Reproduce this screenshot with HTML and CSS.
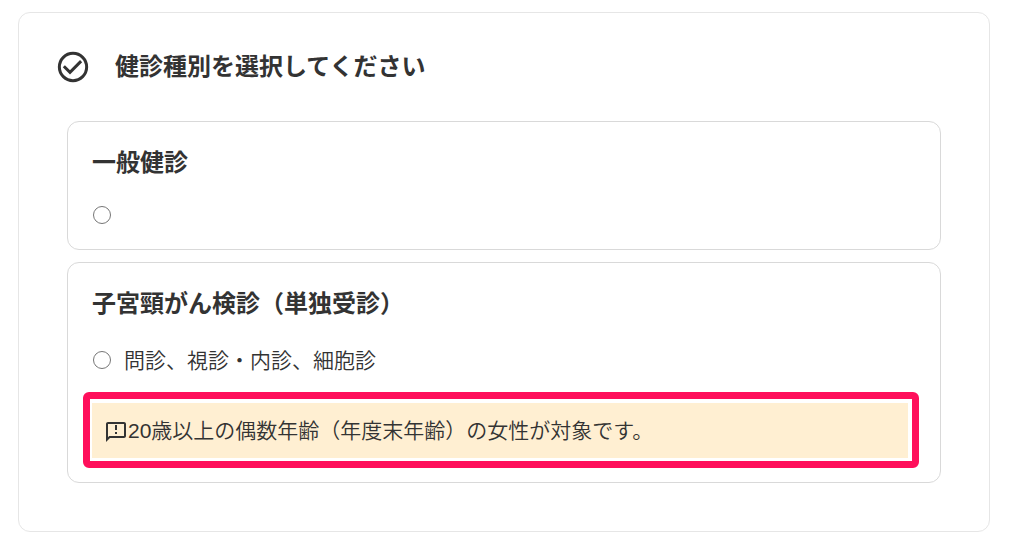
FILE: index.html
```html
<!DOCTYPE html>
<html lang="ja">
<head>
    <meta charset="UTF-8">
    <meta name="viewport" content="width=device-width, initial-scale=1.0">
    <title>健診種別の選択</title>
    <link rel="stylesheet" href="styles.css">
</head>
<body>
    <form class="panel">
        <div class="panel-header">
            <svg class="icon-check" viewBox="0 0 24 24" aria-hidden="true">
                <circle cx="12" cy="12" r="9.100"/>
                <path d="M5.900 11.500l4.100 4.100 7.400-7.500"/>
            </svg>
            <h1 class="title">健診種別を選択してください</h1>
        </div>

        <div class="card-list">
            <section class="card">
                <h2 class="title" id="general">一般健診</h2>
                <div class="option">
                    <input type="radio" name="kenshin" value="general" aria-labelledby="general">
                </div>
            </section>

            <section class="card card-noted">
                <h2 class="title">子宮頸がん検診（単独受診）</h2>
                <label class="option option-text">
                    <input type="radio" name="kenshin" value="cervical">
                    <span>問診、視診・内診、細胞診</span>
                </label>
                <div class="highlight">
                    <p class="notice">
                        <svg class="icon-notice" viewBox="0 0 24 24" aria-hidden="true">
                            <path d="M20 2H4c-1.100 0-2 .9-2 2v18l4-4h14c1.100 0 2-.9 2-2V4c0-1.100-.9-2-2-2zm0 14H5.170L4 17.170V4h16v12zM11 12h2v2h-2zm0-7h2v5h-2z"/>
                        </svg>
                        <span>20歳以上の偶数年齢（年度末年齢）の女性が対象です。</span>
                    </p>
                </div>
            </section>
        </div>
    </form>
</body>
</html>
```

FILE: styles.css
```css
body {
    margin: 0;
    padding: 12px 24px 16px 18px;
    background-color: #fff;
    color: #333;
    font-family: "Liberation Sans", "Noto Sans CJK JP", sans-serif;
    font-size: 21px;
    font-weight: 350;
}

.panel {
    padding: 36px 48px 48px;
    border: 1px solid #e6e6e6;
    border-radius: 12px;
}

.panel-header {
    display: flex;
    align-items: center;
    gap: 24px;
    margin: 0 0 36px -12px;
}

.title {
    margin: 0;
    font-size: 24px;
    font-weight: bold;
    line-height: 32px;
}

.icon-check {
    flex: none;
    width: 36px;
    height: 36px;
    fill: none;
    stroke: #333;
    stroke-width: 2;
}

.card-list {
    display: grid;
    gap: 12px;
}

.card {
    padding: 25px 24px 24px;
    border: 1px solid #d9d9d9;
    border-radius: 12px;
}

.card-noted {
    padding-bottom: 14px;
}

.option {
    display: flex;
    align-items: center;
    gap: 12px;
    min-height: 20px;
    margin-top: 26px;
}

.option-text {
    line-height: 26px;
}

.option-text span {
    padding-top: 2px;
}

.option input {
    flex: none;
    width: 18px;
    height: 18px;
    margin: 0 1px;
}

/* 注意書きを囲む赤枠 */
.highlight {
    margin: 18px -3px 0 -9px;
    padding: 4px 4px 3px 2px;
    border: 7px solid #ff0f5b;
    border-radius: 6px;
}

.notice {
    display: flex;
    align-items: center;
    margin: 0;
    padding: 12px;
    background-color: #ffefd2;
    line-height: 31px;
}

.icon-notice {
    flex: none;
    width: 24px;
    height: 24px;
    margin-top: 2px;
    fill: #333;
}
```
